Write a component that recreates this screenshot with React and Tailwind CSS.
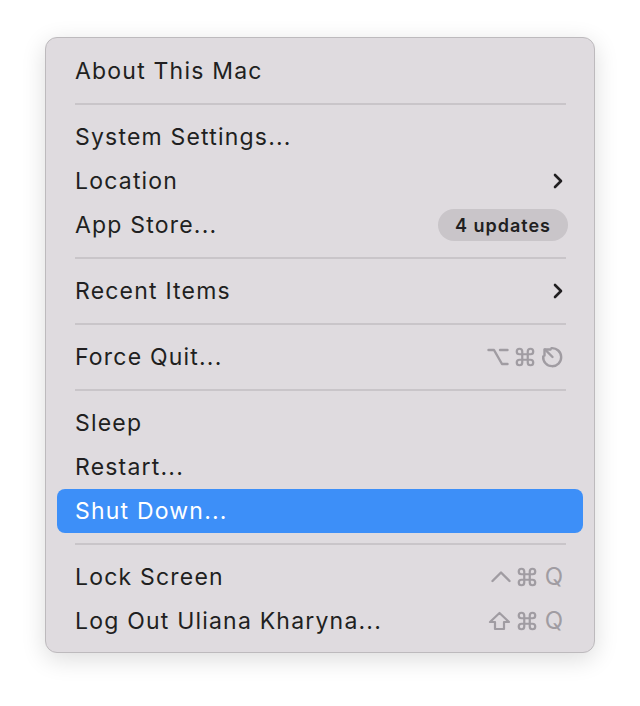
import { ChevronRight, Command } from 'lucide-react';

const font = { fontFamily: 'Inter, "Liberation Sans", sans-serif' };

const Sep = () => (
  <div className="h-[22px] flex items-center pl-[29px] pr-[28px]">
    <div className="h-[2px] w-full bg-[#c9c5c9]" />
  </div>
);

const stroke = { fill: 'none', stroke: 'currentColor', strokeWidth: 2.4, strokeLinecap: 'round', strokeLinejoin: 'round' };

const OptIcon = () => (
  <svg width="22" height="18" viewBox="0 0 22 18" {...stroke}>
    <path d="M1.5 2 H7 L15 16 H20.5" />
    <path d="M13 2 H20.5" />
  </svg>
);

const EscIcon = () => (
  <svg width="24" height="22" viewBox="0 0 24 22" {...stroke}>
    <path d="M10.5 2.2 A9 9 0 1 1 2.2 10.5" />
    <path d="M11.5 11 L4 3.5" />
    <path d="M3.5 9.5 L3.5 3.5 L9.5 3.5" />
  </svg>
);

const CtrlIcon = () => (
  <svg width="20" height="18" viewBox="0 0 20 18" {...stroke}>
    <path d="M1.5 13 L10 4.5 L18.5 13" />
  </svg>
);

const ShiftIcon = () => (
  <svg width="23" height="20" viewBox="0 0 23 20" {...stroke} strokeWidth={2.2}>
    <path d="M11.5 2 L2 11 H7 V18 H16 V11 H21 Z" />
  </svg>
);

const Cmd = () => <Command size={22} strokeWidth={2.4} />;

const Keys = ({ children }) => (
  <div className="flex items-center gap-[5px] text-[#a09ca2] text-[24px] -mr-[1px]">{children}</div>
);

const Row = ({ label, right, active }) => (
  <div
    className={`h-[44px] mx-[11px] pl-[18px] pr-[19px] flex items-center justify-between rounded-[8px] ${
      active ? 'bg-[#3d8ff8] text-white' : 'text-[#211f21]'
    }`}
  >
    <span className="text-[23px] tracking-[1.2px]">{label}</span>
    {right}
  </div>
);

const Chevron = () => <ChevronRight size={24} strokeWidth={2.6} className="text-[#211f21] -mr-[6px]" />;

export default function App() {
  return (
    <div className="w-[640px] h-[706px] bg-white pt-[37px] pl-[45px] overflow-hidden" style={font}>
      <div className="w-[550px] h-[616px] bg-[#dfdbdf] rounded-[12px] border border-[#bdbabd] shadow-[0_6px_24px_rgba(0,0,0,0.14)] pt-[11px]">
        <Row label="About This Mac" />
        <Sep />
        <Row label="System Settings..." />
        <Row label="Location" right={<Chevron />} />
        <Row
          label="App Store..."
          right={
            <span className="h-[32px] px-[17px] -mr-[4px] rounded-full bg-[#c9c5c9] text-[18px] tracking-[1px] font-semibold flex items-center">
              4 updates
            </span>
          }
        />
        <Sep />
        <Row label="Recent Items" right={<Chevron />} />
        <Sep />
        <Row
          label="Force Quit..."
          right={
            <Keys>
              <OptIcon />
              <Cmd />
              <EscIcon />
            </Keys>
          }
        />
        <Sep />
        <Row label="Sleep" />
        <Row label="Restart..." />
        <Row label="Shut Down..." active />
        <Sep />
        <Row
          label="Lock Screen"
          right={
            <Keys>
              <CtrlIcon />
              <Cmd />
              <span className="w-[22px] text-center">Q</span>
            </Keys>
          }
        />
        <Row
          label="Log Out Uliana Kharyna..."
          right={
            <Keys>
              <ShiftIcon />
              <Cmd />
              <span className="w-[22px] text-center">Q</span>
            </Keys>
          }
        />
      </div>
    </div>
  );
}
